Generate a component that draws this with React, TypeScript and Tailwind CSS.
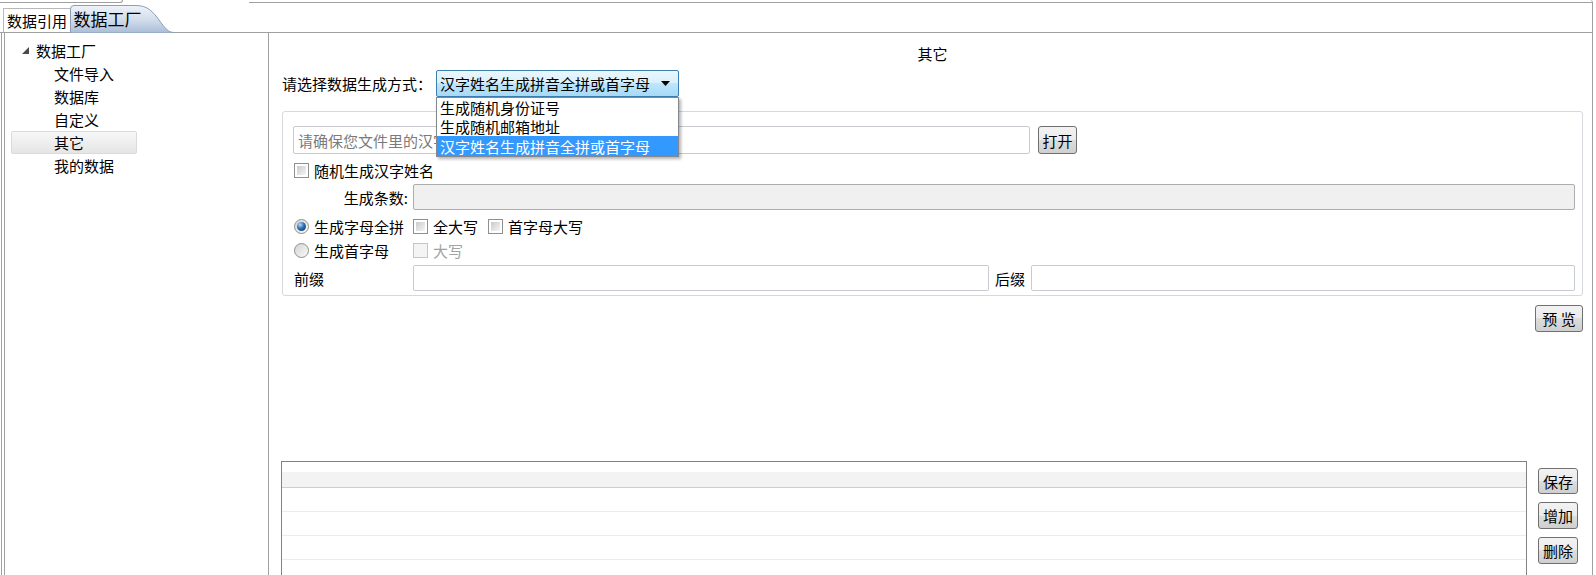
import React from 'react'

const line = 'border-[#a0a0a0]'
const btn =
  'flex items-center justify-center border border-[#707070] rounded-[3px] bg-[linear-gradient(#f2f2f2,#ebebeb_50%,#dddddd_50%,#cfcfcf)] text-[15px] leading-none text-black'

function CheckBox({ disabled = false, className = '' }: { disabled?: boolean; className?: string }) {
  return (
    <span
      className={
        disabled
          ? `block w-[15px] h-[15px] shrink-0 border border-[#c6c6c6] bg-[#f4f4f4] ${className}`
          : `block w-[15px] h-[15px] shrink-0 border border-[#8e8f8f] p-[2px] bg-white ${className}`
      }
    >
      {!disabled && <span className="block w-full h-full bg-linear-to-br from-[#cbcbcb] to-[#f5f5f5]" />}
    </span>
  )
}

function Radio({ checked = false }: { checked?: boolean }) {
  return (
    <span className="w-[15px] h-[15px] shrink-0 rounded-full border border-[#8e8f8f] bg-linear-to-br from-[#d4d4d4] to-[#fafafa] flex items-center justify-center">
      {checked && (
        <span className="w-[9px] h-[9px] rounded-full bg-[radial-gradient(circle_at_35%_30%,#b5ddfb,#2f6db0_45%,#0c2f5e)]" />
      )}
    </span>
  )
}

const tree = ['文件导入', '数据库', '自定义', '其它', '我的数据']

export default function App() {
  return (
    <div className="w-[1596px] h-[575px] overflow-hidden bg-white text-black font-['Noto_Sans_CJK_SC','Noto_Sans',sans-serif]">
      {/* tab strip */}
      <div className={`flex h-[33px] border-b ${line} mr-[3px]`}>
        <div className="w-[173px] flex flex-col">
          <div className="h-[5px]">
            <div className={`w-[123px] h-[3px] border-b border-r ${line} rounded-br-[3px]`} />
          </div>
          <div className="flex-1 flex items-stretch pl-[3px]">
            <div className="w-[67px] mt-[3px] border-l border-t border-[#b8b8b8] bg-white flex items-center pl-[3px] text-[15px] leading-none">
              数据引用
            </div>
            <div className="relative w-[104px] flex items-center pl-[4px] text-[17px] leading-none">
              <svg className="absolute inset-0" width="104" height="28" viewBox="0 0 104 28">
                <defs>
                  <linearGradient id="tabg" x1="0" y1="0" x2="0" y2="1">
                    <stop offset="0" stopColor="#eef3f9" />
                    <stop offset="0.5" stopColor="#d3deec" />
                    <stop offset="1" stopColor="#a9bdd8" />
                  </linearGradient>
                </defs>
                <path
                  d="M0.5 28 V4 Q0.5 0.5 4 0.5 H66 C78 0.5 83 7 89 15 C95 23 98 27.5 104 27.5 V28 Z"
                  fill="url(#tabg)"
                  stroke="#8c9db5"
                />
              </svg>
              <span className="relative">数据工厂</span>
            </div>
          </div>
        </div>
        <div className="flex-1 flex flex-col">
          <div className={`h-[3px] ml-[76px] border-b border-r ${line} rounded-tr-[6px]`} />
          <div className={`flex-1 border-r ${line}`} />
        </div>
      </div>

      {/* body */}
      <div className={`flex h-[542px] ml-[1px] mr-[3px] border-l border-r ${line}`}>
        {/* tree */}
        <div className={`ml-[2px] w-[265px] border-l border-r ${line} pt-[6px] text-[15px] leading-none`}>
          <div className="h-[23px] flex items-center">
            <svg className="ml-[17px] mr-[7px]" width="7" height="7" viewBox="0 0 7 7">
              <path d="M7 0 V7 H0 Z" fill="#4a4a4a" />
            </svg>
            数据工厂
          </div>
          {tree.map((t) => (
            <div
              key={t}
              className={
                t === '其它'
                  ? 'h-[23px] ml-[6px] w-[126px] flex items-center pl-[42px] rounded-[2px] border border-[#dadada] bg-linear-to-b from-[#f7f7f7] to-[#e5e5e5]'
                  : 'h-[23px] ml-[6px] w-[126px] flex items-center pl-[43px]'
              }
            >
              {t}
            </div>
          ))}
        </div>

        {/* content */}
        <div className="flex-1 flex flex-col pl-[13px] pr-[9px] pt-[10px] text-[15px] leading-none">
          <div className="h-[20px] flex items-center justify-center">其它</div>

          <div className="mt-[7px] h-[27px] flex items-center">
            <span className="w-[154px]">请选择数据生成方式：</span>
            <div className="relative w-[243px] h-[27px]">
              <div className="h-full border border-[#3c7fb1] rounded-[2px] bg-[linear-gradient(#eaf6fd,#d9f0fc_50%,#bee6fd_50%,#a7d9f5)] flex items-center pl-[3px] pr-[8px]">
                <span className="flex-1">汉字姓名生成拼音全拼或首字母</span>
                <svg width="9" height="5" viewBox="0 0 9 5">
                  <path d="M0 0 H9 L4.5 5 Z" fill="#000" />
                </svg>
              </div>
              <div className="absolute z-10 top-[27px] left-0 w-[243px] border border-[#828790] bg-white shadow-[2px_2px_3px_rgba(0,0,0,0.3)]">
                <div className="h-[19px] flex items-center pl-[3px]">生成随机身份证号</div>
                <div className="h-[19px] flex items-center pl-[3px]">生成随机邮箱地址</div>
                <div className="h-[20px] flex items-center pl-[3px] bg-[#3399ff] text-white">汉字姓名生成拼音全拼或首字母</div>
              </div>
            </div>
          </div>

          {/* group box */}
          <div className="mt-[14px] border border-[#d5d9de] rounded-[3px] pl-[10px] pr-[7px] pt-[14px] pb-[4px]">
            <div className="h-[28px] flex items-center">
              <div className="w-[737px] h-full border border-[#c9cbd0] rounded-[2px] flex items-center pl-[4px] text-[#7b7b7b]">
                请确保您文件里的汉字
              </div>
              <button className={`${btn} ml-[8px] w-[39px] h-[28px]`}>打开</button>
            </div>

            <div className="mt-[5px] h-[22px] flex items-center">
              <CheckBox className="ml-[1px]" />
              <span className="ml-[5px]">随机生成汉字姓名</span>
            </div>

            <div className="mt-[3px] h-[26px] flex items-center">
              <span className="w-[120px] pr-[5px] text-right">生成条数:</span>
              <div className="flex-1 h-full border border-[#adadad] rounded-[2px] bg-[#f0f0f0]" />
            </div>

            <div className="mt-[5px] h-[22px] flex items-center">
              <div className="w-[120px] flex items-center pl-[1px]">
                <Radio checked />
                <span className="ml-[5px]">生成字母全拼</span>
              </div>
              <CheckBox />
              <span className="ml-[5px]">全大写</span>
              <CheckBox className="ml-[10px]" />
              <span className="ml-[5px]">首字母大写</span>
            </div>

            <div className="mt-[2px] h-[22px] flex items-center">
              <div className="w-[120px] flex items-center pl-[1px]">
                <Radio />
                <span className="ml-[5px]">生成首字母</span>
              </div>
              <CheckBox disabled />
              <span className="ml-[5px] text-[#a3a3a3]">大写</span>
            </div>

            <div className="mt-[4px] h-[26px] flex items-center">
              <span className="w-[120px] pl-[1px]">前缀</span>
              <div className="w-[576px] h-full border border-[#c9cbd0] rounded-[2px]" />
              <span className="w-[42px] text-center">后缀</span>
              <div className="flex-1 h-full border border-[#c9cbd0] rounded-[2px]" />
            </div>
          </div>

          <div className="mt-[9px] flex justify-end">
            <button className={`${btn} w-[48px] h-[27px]`}>预 览</button>
          </div>

          {/* table + actions */}
          <div className="mt-[129px] flex flex-1">
            <div className="flex-1 -ml-[1px] border-l border-t border-r border-[#828282]">
              <div className="h-[10px]" />
              <div className="h-[16px] bg-[#f3f3f3] border-b border-[#cdcdcd]" />
              <div className="h-[24px] border-b border-[#ececec]" />
              <div className="h-[24px] border-b border-[#ececec]" />
              <div className="h-[24px] border-b border-[#ececec]" />
            </div>
            <div className="ml-[11px] mr-[5px] w-[40px] pt-[7px] flex flex-col gap-[8px]">
              <button className={`${btn} w-[40px] h-[26px]`}>保存</button>
              <button className={`${btn} w-[40px] h-[27px]`}>增加</button>
              <button className={`${btn} w-[40px] h-[27px]`}>删除</button>
            </div>
          </div>
        </div>
      </div>
    </div>
  )
}
